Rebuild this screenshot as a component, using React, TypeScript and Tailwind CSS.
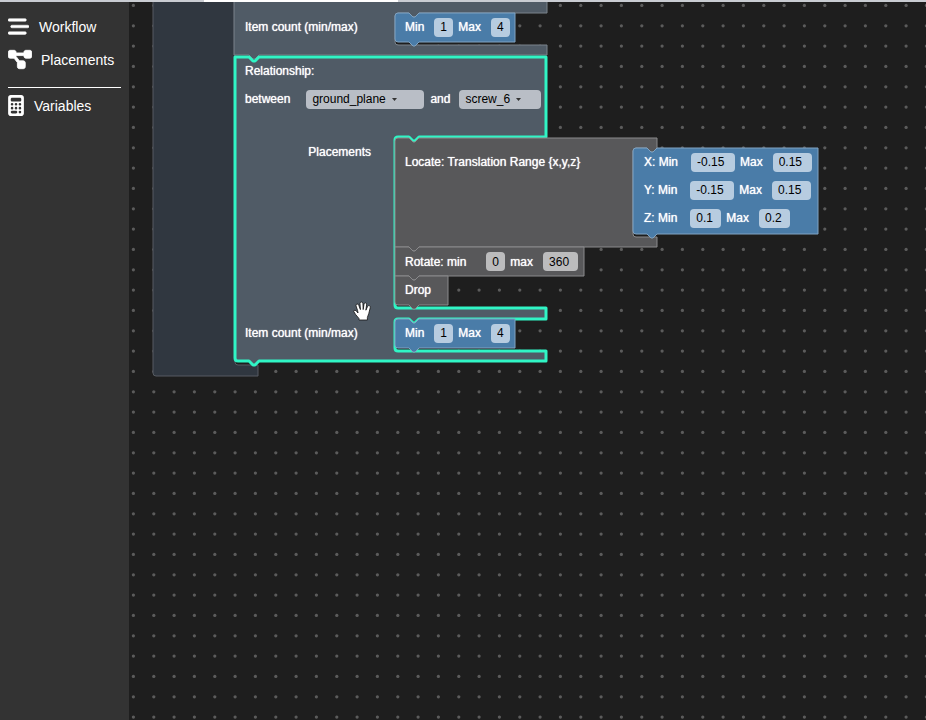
import React from 'react';
import { FaBarsStaggered, FaCalculator, FaDiagramProject } from 'react-icons/fa6';

interface ShapeProps {
    d: string;
    className: string;
}

// Outline of a block; it is drawn behind the block's rows
const Shape: React.FC<ShapeProps> = ({ d, className }) => (
    <svg className="absolute inset-0 w-full h-full overflow-visible pointer-events-none" aria-hidden="true">
        <path d={d} className={className} strokeLinejoin="round" />
    </svg>
);

const NOTCH = 'l4,4 h2 l4,-4';
const TAB = 'l-4,4 h-2 l-4,-4';

const stackShape = (width: number, height: number, top = 0, bottom = 0) =>
    `M0,${top} q0,${-top} ${top},${-top} H14 ${NOTCH} H${width} V${height} H24 ${TAB} H${bottom} q${-bottom},0 ${-bottom},${-bottom} Z`;

const OUTER_SHAPE = 'M0,-10 V371 q0,3 3,3 H105 V363 H85 q-3,0 -3,-3 V-10';
const PREVIOUS_SHAPE = `M0,-10 V53 H15 ${NOTCH} H313 V43 H164 q-3,0 -3,-3 V14 q0,-3 3,-3 H175 ${NOTCH} H313 V-10`;
const RELATIONSHIP_SHAPE = `M0,0 H14 ${NOTCH} H311 V80 H184 ${TAB} H163 q-3,0 -3,3 V248 q0,3 3,3 H311 V262 H184 ${TAB} H163 q-3,0 -3,3 V291 q0,3 3,3 H311 V304 H24 ${TAB} H3 q-3,0 -3,-3 Z`;
const LOCATE_SHAPE = `M0,3 q0,-3 3,-3 H14 ${NOTCH} H262 V10 ${TAB} H241 q-3,0 -3,3 V96 q0,3 3,3 H262 V109 H24 ${TAB} H0 Z`;

interface NumberFieldProps {
    label: string;
    value: string;
    className: string;
    tone?: string;
}

const NumberField: React.FC<NumberFieldProps> = ({ label, value, className, tone = 'bg-[#b7cce0]' }) => (
    <label className="flex items-center shrink-0">
        {label}
        <input
            type="text"
            defaultValue={value}
            className={`h-[19px] rounded-sm text-black px-[6px] outline-none text-shadow-none ${tone} ${className}`}
        />
    </label>
);

interface SelectFieldProps {
    label: string;
    value: string;
    className: string;
    labelClass: string;
    arrowClass: string;
}

const SelectField: React.FC<SelectFieldProps> = ({ label, value, className, labelClass, arrowClass }) => (
    <label className="flex items-center shrink-0">
        <span className={labelClass}>{label}</span>
        <span className="relative flex">
            <select
                defaultValue={value}
                className={`h-[19px] rounded-sm bg-[#b9bec6] text-black pl-[6px] appearance-none outline-none text-shadow-none ${className}`}
            >
                <option>{value}</option>
            </select>
            <svg viewBox="0 0 5 3" className={`absolute top-2 h-[3px] w-[5px] fill-[#333] pointer-events-none ${arrowClass}`} aria-hidden="true">
                <path d="M0,0 H5 L2.5,3 Z" />
            </svg>
        </span>
    </label>
);

const BLUE = 'fill-[#4a7ca8] stroke-[#80a3c2]';
const GRAY = 'fill-[#58585a] stroke-[#8a8a8c]';

const CountBlock: React.FC<{ className: string }> = ({ className }) => (
    <div className={`absolute left-[266px] w-[120px] h-[29px] pl-[10px] ${className}`}>
        <Shape d={stackShape(120, 29, 3, 3)} className={BLUE} />
        <div className="relative flex items-center h-7 gap-[5px]">
            <NumberField label="Min" value="1" className="w-[19px] ml-[10px]" />
            <NumberField label="Max" value="4" className="w-[19px] ml-[10px]" />
        </div>
    </div>
);

const RANGES = [
    { axis: 'X', min: '-0.15', max: '0.15', minClass: 'w-11 ml-[13px]', maxClass: 'w-[39px] ml-[10px]' },
    { axis: 'Y', min: '-0.15', max: '0.15', minClass: 'w-11 ml-[13px]', maxClass: 'w-[39px] ml-[10px]' },
    { axis: 'Z', min: '0.1', max: '0.2', minClass: 'w-[31px] ml-[13px]', maxClass: 'w-[31px] ml-[10px]' },
];

const Sidebar = () => (
    <nav className="w-[129px] shrink-0 bg-[#333] text-sm text-white px-2 pt-[14px]">
        <a href="#workflow" className="flex items-center h-[21px] gap-[10px]">
            <FaBarsStaggered className="w-[21px] h-[21px] stroke-white stroke-12" />
            Workflow
        </a>
        <a href="#placements" className="flex items-center h-[21px] gap-[9px] mt-3">
            <FaDiagramProject className="w-6 h-[21px] stroke-white stroke-20" />
            Placements
        </a>
        <hr className="mt-[17px] border-white" />
        <a href="#variables" className="flex items-center h-[21px] gap-[10px] mt-[7px]">
            <FaCalculator className="w-4 h-[21px]" />
            Variables
        </a>
    </nav>
);

// Three dots per 61px tile in each direction
const DotGrid = () => (
    <svg className="absolute inset-0 w-full h-full" aria-hidden="true">
        <defs>
            <pattern id="dots" width="61" height="61" patternUnits="userSpaceOnUse" x="-6" y="-7">
                {[10.4, 30.8, 51.1].map((y) =>
                    [10.4, 30.8, 51.1].map((x) => <circle key={`${x}-${y}`} cx={x} cy={y} r="1.6" fill="#5c5c5c" />)
                )}
            </pattern>
        </defs>
        <rect width="100%" height="100%" fill="url(#dots)" />
    </svg>
);

const GrabCursor = () => (
    <svg viewBox="0 0 18 20" className="absolute left-[224px] top-[299px] w-[18px] h-5" aria-hidden="true">
        <path
            d="M6,19 V17.5 L2.6,13.5 L0.8,10.6 Q0.5,9.2 2,9.2 Q3.4,9.4 5,12 L4.6,9.5 L3,4.8 Q2.8,3.2 4.2,3 Q5.4,3 5.9,4.6 L7.4,8.6 L7,2.6 Q7,1 8.4,1 Q9.8,1 9.9,2.6 L10.2,8.6 L11,3 Q11.4,1.6 12.6,1.9 Q13.8,2.2 13.6,3.8 L12.9,9.2 L14.6,5.4 Q15.4,4.2 16.6,4.8 Q17.6,5.4 17.2,6.8 L15.8,12.4 L14.4,16.4 V19 Z"
            fill="#fff"
            stroke="#111"
            strokeWidth="0.8"
            strokeLinejoin="round"
        />
    </svg>
);

const Workspace = () => (
    <main className="relative flex-1 overflow-hidden bg-[#1e1e1e] text-xs text-white [text-shadow:0_0_1px_#fff]">
        <DotGrid />

        <div className="absolute left-6 top-0 w-[105px] h-[374px]">
            <Shape d={OUTER_SHAPE} className="fill-[#303740] stroke-[#565b62]" />
        </div>

        <div className="absolute left-[105px] top-0 w-[313px] h-[53px] pl-[11px] pt-[11px]">
            <Shape d={PREVIOUS_SHAPE} className="fill-[#505b66] stroke-[#7a838b]" />
            <div className="relative flex items-center h-7">Item count (min/max)</div>
        </div>
        <CountBlock className="top-[11px]" />

        <div className="absolute left-[106px] top-[55px] w-[311px] h-[304px] pl-[10px]">
            <Shape d={RELATIONSHIP_SHAPE} className="fill-[#505b66] stroke-[#30f5c5] stroke-3" />
            <div className="relative">
                <div className="flex items-center h-7">Relationship:</div>
                <div className="flex items-center h-7 gap-[6px]">
                    <SelectField
                        label="between"
                        value="ground_plane"
                        className="w-[118px]"
                        labelClass="mr-4"
                        arrowClass="right-[27px]"
                    />
                    <SelectField
                        label="and"
                        value="screw_6"
                        className="w-[82px]"
                        labelClass="mr-[9px]"
                        arrowClass="right-5"
                    />
                </div>
                <div className="flex items-center justify-end h-7 mt-[25px] w-[126px]">Placements</div>
                <div className="flex items-center h-7 mt-[153px]">Item count (min/max)</div>
            </div>
        </div>

        <div className="absolute left-[266px] top-[136px] w-[262px] h-[109px] pl-[10px] pt-[10px]">
            <Shape d={LOCATE_SHAPE} className={GRAY} />
            <div className="relative flex items-center h-7">Locate: Translation Range {'{x,y,z}'}</div>
        </div>
        <div className="absolute left-[266px] top-[245px] w-[189px] h-[29px] pl-[10px]">
            <Shape d={stackShape(189, 29)} className={GRAY} />
            <div className="relative flex items-center h-[29px] gap-[5px]">
                <NumberField label="Rotate: min" value="0" className="w-[19px] ml-5" tone="bg-[#bcbcbd]" />
                <NumberField label="max" value="360" className="w-[35px] ml-[10px]" tone="bg-[#bcbcbd]" />
            </div>
        </div>
        <div className="absolute left-[266px] top-[274px] w-[53px] h-[29px] pl-[10px]">
            <Shape d={stackShape(53, 29, 0, 3)} className={GRAY} />
            <div className="relative flex items-center h-7">Drop</div>
        </div>
        <CountBlock className="top-[317px]" />

        <div className="absolute left-[504px] top-[146px] w-[185px] h-[86px] pl-[11px]">
            <Shape d={stackShape(185, 86, 3, 3)} className={BLUE} />
            <div className="relative">
                {RANGES.map((range) => (
                    <div key={range.axis} className="flex items-center h-7 gap-[5px]">
                        <NumberField label={`${range.axis}: Min`} value={range.min} className={range.minClass} />
                        <NumberField label="Max" value={range.max} className={range.maxClass} />
                    </div>
                ))}
            </div>
        </div>

        <GrabCursor />
    </main>
);

const App: React.FC = () => {
    return (
        <div className="flex flex-col h-screen font-['Liberation_Sans',Arial,sans-serif]">
            <div className="h-[2px] shrink-0 flex bg-[#c9ccd2]">
                <div className="w-[22%]" />
                <div className="w-[21%] bg-white" />
            </div>
            <div className="flex flex-1 min-h-0">
                <Sidebar />
                <Workspace />
            </div>
        </div>
    );
};

export default App;
